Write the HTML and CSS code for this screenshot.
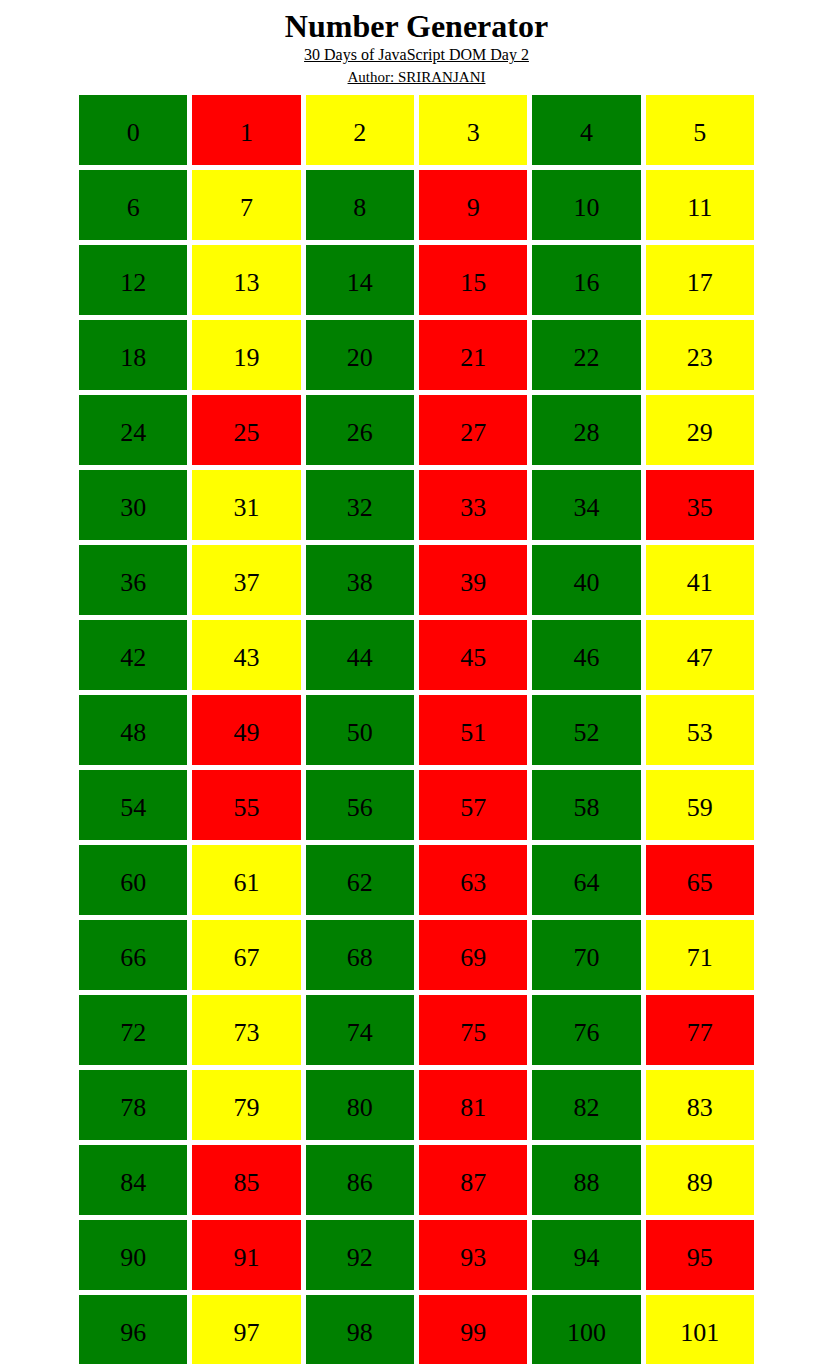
FILE: index.html
```html
<!DOCTYPE html>
<html lang="en">
<head>
  <meta charset="UTF-8" />
  <meta name="viewport" content="width=device-width, initial-scale=1" />
  <title>Number Generator</title>
  <link rel="stylesheet" href="styles.css">
</head>
<body>

  <div class="wrapper">
    <h1>Number Generator</h1>
    <h2>30 Days of JavaScript DOM Day 2</h2>
    <h3>Author: SRIRANJANI</h3>
    <div class="numbers" id="numbers"></div>
  </div>

  <script>
    function isPrime(n) {
      if (n < 2) return false;
      for (let i = 2; i * i <= n; i++) {
        if (n % i === 0) return false;
      }
      return true;
    }

    const box = document.getElementById('numbers');
    for (let i = 0; i <= 101; i++) {
      const div = document.createElement('div');
      div.className = 'num';
      if (isPrime(i)) {
        div.classList.add('prime');
      } else if (i % 2 === 0) {
        div.classList.add('even');
      } else {
        div.classList.add('odd');
      }
      div.textContent = i;
      box.appendChild(div);
    }
  </script>

</body>
</html>
```

FILE: styles.css
```css
body {
  font-family: 'Liberation Serif', 'Times New Roman', serif;
  margin: 0;
  padding: 0 8px;
}
.wrapper {
  width: 675px;
  margin: 0 auto;
  text-align: center;
  position: relative;
  left: 2px;
}
h1 {
  font-size: 32px;
  margin: 8px 0 0;
  line-height: 37px;
}
h2, h3 {
  font-weight: normal;
  text-decoration: underline;
  margin: 0;
}
h2 {
  font-size: 16px;
  line-height: 19px;
}
h3 {
  font-size: 15px;
  line-height: 26px;
}
.numbers {
  display: grid;
  grid-template-columns: repeat(6, 1fr);
  gap: 5px;
  margin-top: 5px;
}
.num {
  height: 70px;
  box-sizing: border-box;
  padding-top: 6px;
  line-height: 64px;
  font-size: 26px;
}
.even {
  background-color: green;
}
.odd {
  background-color: red;
}
.prime {
  background-color: yellow;
}
```
